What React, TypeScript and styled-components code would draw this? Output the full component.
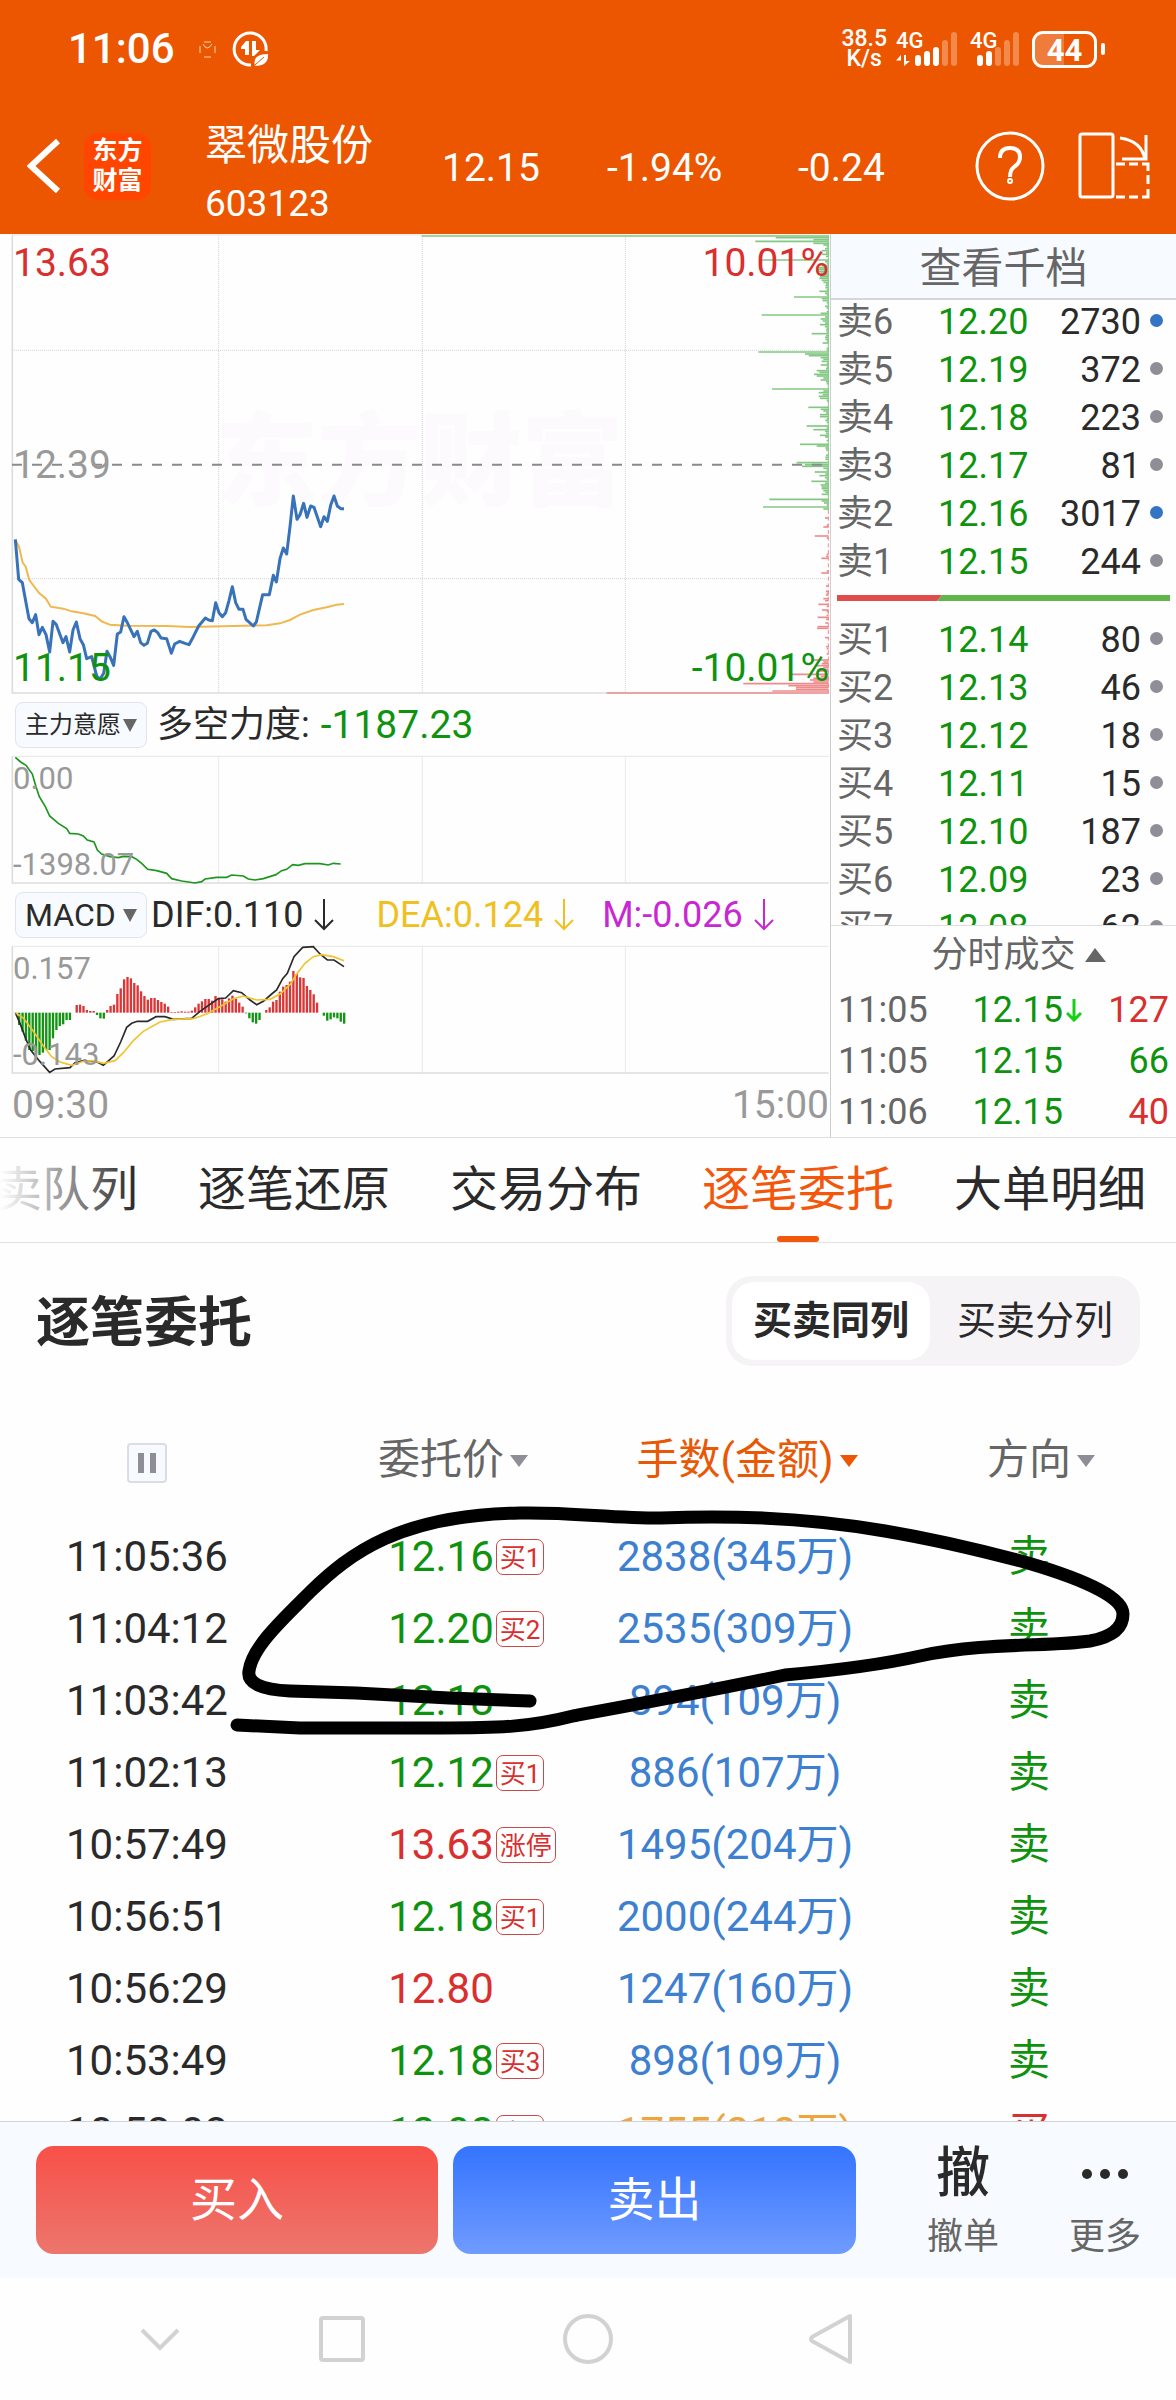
import React from "react";
import styled, { createGlobalStyle } from "styled-components";

const color = {
  brand: "#ec5600",
  red: "#d92f2f",
  green: "#0f930f",
  blue: "#3d80d0",
  amber: "#eda53c",
  ink: "#2a2a2a",
  text: "#666666",
  mute: "#999999",
  line: "#dedede",
  panel: "#f7faff",
};

const Global = createGlobalStyle`
  *, *::before, *::after { box-sizing: border-box; }
  body { margin: 0; background: #fefefe; }
  button {
    margin: 0; padding: 0; border: 0; background: none;
    font: inherit; color: inherit; cursor: pointer;
  }
`;

const Page = styled.div`
  display: flex;
  flex-direction: column;
  height: 100vh;
  overflow: hidden;
  color: ${color.ink};
  background: #fefefe;
  font-family: Roboto, "Noto Sans CJK SC", sans-serif;
  font-size: 36px;
  line-height: 48px;
  white-space: nowrap;
`;

/* ---------- header ---------- */

const Header = styled.header`
  flex: none;
  color: #fff;
  background: ${color.brand};
`;

const StatusBar = styled.div`
  display: flex;
  align-items: center;
  height: 98px;
  padding: 0 71px 0 68px;
`;

const Clock = styled.time`
  margin-right: 24px;
  font-size: 42px;
  font-weight: 500;
`;

const StatusRight = styled.div`
  display: flex;
  align-items: center;
  margin-left: auto;
`;

const NetSpeed = styled.div`
  margin-right: 9px;
  font-size: 23px;
  font-weight: 500;
  line-height: 20px;
  text-align: center;
`;

const Signal = styled.div`
  position: relative;
  height: 36px;
  margin-right: 12px;

  svg { display: block; }
`;

const SignalLabel = styled.span`
  position: absolute;
  left: 0;
  top: 0;
  font-size: 22px;
  font-weight: 500;
  line-height: 20px;
`;

const Battery = styled.div`
  display: flex;
  align-items: center;
  gap: 4px;

  &::after {
    content: "";
    width: 4px;
    height: 12px;
    border-radius: 2px;
    background: #fff;
  }
`;

const BatteryCell = styled.div`
  width: 65px;
  height: 37px;
  border: 3px solid #fff;
  border-radius: 11px;
  background: linear-gradient(90deg, #f07c3c 50%, transparent 50%);
  font-size: 31px;
  font-weight: 700;
  line-height: 33px;
  text-align: center;
`;

const TitleBar = styled.div`
  display: grid;
  grid-template-columns: 57px 121px 237fr 165fr 191fr 177fr 103px 72px;
  align-items: center;
  height: 136px;
  padding: 0 26px 0 27px;
`;

const Figure = styled.span`
  padding-top: 4px;
  font-size: 39px;
`;

const IconButton = styled.button`
  display: flex;
  align-items: center;

  svg { display: block; }
`;

const Logo = styled.div`
  width: 67px;
  height: 67px;
  padding: 3px 0;
  border-radius: 14px;
  background: #ff4600;
  font-size: 25px;
  font-weight: 700;
  line-height: 30px;
  text-align: center;
`;

const StockName = styled.h1`
  margin: 16px 0 0;
  font-size: 42px;
  font-weight: 400;
  line-height: 60px;
`;

const StockCode = styled.div`
  font-size: 37px;
  line-height: 56px;
`;

/* ---------- quote area ---------- */

const Quote = styled.section`
  flex: none;
  display: grid;
  grid-template-columns: 830fr 346fr;
  border-bottom: 1px solid ${color.line};
`;

const Charts = styled.div`
  min-width: 0;
`;

const Chart = styled.div<{ $height: number }>`
  position: relative;
  height: ${(p) => p.$height}px;

  svg { position: relative; display: block; width: 100%; height: 100%; }
`;

const AxisLabel = styled.span<{ $tone: string; $side?: "right"; $top: number; $small?: boolean }>`
  position: absolute;
  top: ${(p) => p.$top}px;
  ${(p) => (p.$side === "right" ? "right: 1px;" : "left: 13px;")}
  color: ${(p) => p.$tone};
  font-size: ${(p) => (p.$small ? 31 : 39)}px;
  line-height: 40px;
`;

const Watermark = styled.span`
  position: absolute;
  top: 164px;
  left: 26%;
  color: #fdfafd;
  font-size: 102px;
  font-weight: 900;
  line-height: 130px;
`;

const IndicatorRow = styled.div`
  display: flex;
  align-items: center;
  height: 60px;
  padding-left: 15px;
`;

const IndicatorButton = styled.button<{ $latin?: boolean }>`
  display: flex;
  align-items: center;
  justify-content: space-between;
  width: 132px;
  height: 46px;
  padding: 0 9px;
  border: 1px solid #e1e4ee;
  border-radius: 8px;
  background: ${color.panel};
  font-size: ${(p) => (p.$latin ? 32 : 24)}px;

  svg { color: ${color.text}; }
`;

const Reading = styled.span<{ $tone?: string; $gap: number }>`
  display: flex;
  align-items: center;
  gap: 11px;
  margin-left: ${(p) => p.$gap}px;
  color: ${(p) => p.$tone ?? color.ink};
`;

const ForceValue = styled.span`
  color: ${color.green};
  font-size: 39px;
`;

const TimeAxis = styled.div`
  display: flex;
  align-items: center;
  justify-content: space-between;
  height: 60px;
  padding: 0 1px 0 12px;
  color: ${color.mute};
  font-size: 39px;
`;

const Side = styled.aside`
  min-width: 0;
  border-left: 1px solid #cdcdd2;
`;

const DepthButton = styled.button`
  display: block;
  width: 100%;
  height: 66px;
  padding-top: 6px;
  border-bottom: 2px solid #d3d6de;
  background: ${color.panel};
  color: ${color.text};
  font-size: 42px;
`;

const DepthPane = styled.div`
  height: 625px;
  overflow: hidden;
`;

const DepthTable = styled.table`
  width: 100%;
  border-collapse: collapse;
  table-layout: fixed;

  &:first-child { margin-top: -2px; }
  td, th { padding: 0; height: 48px; font-weight: 400; text-align: left; }
  th { width: 31%; padding-left: 6px; color: ${color.text}; }
  td:nth-child(2) { width: 28%; color: ${color.green}; }
  td:nth-child(3) { text-align: right; }
  td:nth-child(4) { width: 35px; }
`;

const Dot = styled.span<{ $big?: boolean }>`
  display: block;
  width: 13px;
  height: 13px;
  margin: 0 auto 4px 9px;
  border-radius: 50%;
  background: ${(p) => (p.$big ? "#3374c4" : "#8e8e96")};
`;

const Balance = styled.div`
  height: 30px;
  padding: 9px 6px 15px;

  svg { display: block; width: 100%; height: 6px; }
`;

const TickButton = styled.button`
  display: flex;
  align-items: center;
  justify-content: center;
  gap: 9px;
  width: 100%;
  height: 59px;
  padding-left: 30px;
  border-top: 1px solid ${color.line};
  color: ${color.text};
`;

const TickTable = styled.table`
  width: 100%;
  border-collapse: collapse;
  table-layout: fixed;

  td { padding: 0; height: 51px; }
  td:nth-child(1) { width: 41%; padding-left: 7px; color: ${color.text}; }
  td:nth-child(2) { width: 33%; color: ${color.green}; }
  td:nth-child(3) { padding-right: 7px; text-align: right; }
  svg { margin-left: 3px; color: #16d016; }
`;

const Volume = styled.td<{ $up: boolean }>`
  color: ${(p) => (p.$up ? color.red : color.green)};
`;

/* ---------- tabs ---------- */

const Tabs = styled.nav`
  position: relative;
  flex: none;
  display: flex;
  gap: 60px;
  height: 105px;
  padding-left: 198px;
  overflow: hidden;
  border-bottom: 1px solid #e3e3e3;

  &::before {
    content: "";
    position: absolute;
    z-index: 1;
    left: 0;
    top: 0;
    width: 135px;
    height: 100px;
    background: linear-gradient(90deg, #fefefe, rgba(254, 254, 254, 0));
  }
`;

const Tab = styled.button<{ $active?: boolean }>`
  position: relative;
  flex: none;
  color: ${(p) => (p.$active ? "#f2570c" : color.ink)};
  font-size: 48px;

  &:first-child { margin-left: -252px; }
  &::after {
    content: "";
    display: ${(p) => (p.$active ? "block" : "none")};
    position: absolute;
    left: calc(50% - 21px);
    bottom: 0;
    width: 42px;
    height: 6px;
    border-radius: 3px;
    background: #f2570c;
  }
`;

/* ---------- order list ---------- */

const Orders = styled.section`
  position: relative;
  flex: 1;
  min-height: 0;
  overflow: hidden;
`;

const OrdersHead = styled.div`
  display: flex;
  align-items: center;
  justify-content: space-between;
  height: 156px;
  padding: 0 36px;
`;

const OrdersTitle = styled.h2`
  margin: 6px 0 0;
  font-size: 54px;
  font-weight: 700;
  line-height: 60px;
`;

const Segments = styled.div`
  display: grid;
  grid-template-columns: 198px 198px;
  gap: 6px;
  height: 90px;
  padding: 6px;
  border-radius: 26px;
  background: #f6f3f7;
  font-size: 39px;
`;

const Segment = styled.button<{ $active?: boolean }>`
  border-radius: 22px;
  background: ${(p) => (p.$active ? "#fff" : "transparent")};
  font-weight: ${(p) => (p.$active ? 700 : 400)};
`;

const OrderTable = styled.table`
  width: 100%;
  border-collapse: collapse;
  table-layout: fixed;
  font-size: 42px;
  text-align: center;

  th { height: 122px; padding: 0; font-weight: 400; }
  td { height: 72px; padding: 0; }
`;

const SortButton = styled.button<{ $active?: boolean }>`
  position: relative;
  color: ${(p) => (p.$active ? "#e85805" : color.text)};

  svg {
    position: absolute;
    left: calc(100% + 6px);
    top: 19px;
    color: ${(p) => (p.$active ? color.brand : "#8e8e96")};
  }
`;

const PauseButton = styled.button`
  display: inline-flex;
  align-items: center;
  justify-content: center;
  gap: 6px;
  width: 40px;
  height: 40px;
  border: 2px solid #dadde5;
  border-radius: 4px;
  background: ${color.panel};
  vertical-align: middle;

  &::before, &::after {
    content: "";
    width: 6px;
    height: 20px;
    background: #8e8e96;
  }
`;

const Tone = styled.span<{ $tone: string }>`
  position: relative;
  display: inline-block;
  color: ${(p) => p.$tone};
`;

const Tag = styled.span`
  position: absolute;
  left: calc(100% + 2px);
  top: 6px;
  height: 36px;
  padding: 0 3px;
  border: 1px solid #c94a4a;
  border-radius: 7px;
  color: ${color.red};
  font-size: 26px;
  line-height: 36px;
`;

const Scribble = styled.svg`
  position: absolute;
  left: 0;
  top: 0;
  width: 100%;
  height: 520px;
  pointer-events: none;
`;

/* ---------- bottom ---------- */

const TradeBar = styled.footer`
  flex: none;
  display: grid;
  grid-template-columns: 402fr 403fr 305fr;
  gap: 15px;
  padding: 24px 0 24px 36px;
  border-top: 1px solid #cfd2da;
  background: ${color.panel};
`;

const TradeButton = styled.button<{ $side: "buy" | "sell" }>`
  height: 108px;
  border-radius: 18px;
  background: ${(p) =>
    p.$side === "buy"
      ? "linear-gradient(#f85048, #ec766d)"
      : "linear-gradient(#3474ff, #709bff)"};
  color: #fff;
  font-size: 47px;
`;

const QuickActions = styled.div`
  display: grid;
  grid-template-columns: 1fr 1fr;
  padding-left: 21px;
`;

const QuickButton = styled.button`
  display: flex;
  flex-direction: column;
  align-items: center;
  gap: 18px;
  height: 108px;
  color: ${color.text};
  line-height: 34px;
`;

const QuickIcon = styled.span`
  display: flex;
  align-items: center;
  height: 56px;
  color: ${color.ink};
  font-size: 54px;
  font-weight: 500;
`;

const SystemNav = styled.nav`
  flex: none;
  display: grid;
  grid-template-columns: 116fr 248fr 244fr 242fr;
  justify-items: center;
  align-items: center;
  height: 122px;
  padding: 0 224px 0 102px;
`;

/* ---------- data ---------- */

const sells = [
  ["卖6", "12.20", "2730"],
  ["卖5", "12.19", "372"],
  ["卖4", "12.18", "223"],
  ["卖3", "12.17", "81"],
  ["卖2", "12.16", "3017"],
  ["卖1", "12.15", "244"],
];

const buys = [
  ["买1", "12.14", "80"],
  ["买2", "12.13", "46"],
  ["买3", "12.12", "18"],
  ["买4", "12.11", "15"],
  ["买5", "12.10", "187"],
  ["买6", "12.09", "23"],
  ["买7", "12.08", "62"],
];

const ticks = [
  { time: "11:05", price: "12.15", volume: "127", up: true, arrow: true },
  { time: "11:05", price: "12.15", volume: "66", up: false },
  { time: "11:06", price: "12.15", volume: "40", up: true },
];

const orders = [
  { time: "11:05:36", price: "12.16", tag: "买1", amount: "2838(345万)" },
  { time: "11:04:12", price: "12.20", tag: "买2", amount: "2535(309万)" },
  { time: "11:03:42", price: "12.18", amount: "894(109万)" },
  { time: "11:02:13", price: "12.12", tag: "买1", amount: "886(107万)" },
  { time: "10:57:49", price: "13.63", tag: "涨停", amount: "1495(204万)", up: true },
  { time: "10:56:51", price: "12.18", tag: "买1", amount: "2000(244万)" },
  { time: "10:56:29", price: "12.80", amount: "1247(160万)", up: true },
  { time: "10:53:49", price: "12.18", tag: "买3", amount: "898(109万)" },
  { time: "10:53:08", price: "12.08", tag: "卖1", amount: "1755(212万)", buy: true },
];

const pricePath =
  "46,928 56,1048 67,1058 78,1118 87,1166 97,1178 107,1154 117,1214 127,1192 138,1214 149,1266 159,1174 169,1184 189,1238 198,1220 209,1266 219,1200 229,1176 240,1226 250,1244 260,1286 275,1280 290,1338 300,1348 311,1330 321,1264 331,1282 341,1306 352,1212 362,1206 372,1160 383,1180 402,1220 412,1204 422,1238 432,1246 442,1240 453,1204 463,1200 473,1208 483,1224 500,1226 514,1270 524,1242 539,1234 555,1240 567,1244 580,1220 596,1188 616,1164 626,1170 637,1172 647,1118 657,1148 667,1160 677,1148 687,1112 697,1070 707,1118 717,1138 729,1138 738,1168 760,1188 769,1176 788,1094 808,1094 820,1036 829,1056 840,986 850,954 860,972 870,890 880,798 891,868 900,854 911,820 921,862 932,828 942,832 962,890 972,860 982,874 992,826 1002,798 1012,828 1022,836 1032,836";

const averagePath =
  "46,930 57,950 68,998 77,1010 88,1050 118,1090 138,1106 152,1130 190,1136 215,1144 250,1150 285,1158 305,1174 330,1184 380,1187 500,1188 570,1191 700,1188 800,1186 840,1180 870,1170 900,1154 940,1140 980,1132 1010,1124 1032,1122";

const sellVolumes: [number, number][] = [
  [18, 65], [23, 1127], [29, 1240], [34, 1066], [40, 1240], [45, 1270], [50, 1280], [56, 1275], [62, 1265], [68, 1278],
  [73, 1265], [79, 1278], [90, 1080], [95, 1275], [101, 1280], [107, 1265], [113, 1255], [118, 1250], [124, 1250],
  [129, 1262], [135, 1270], [140, 1260], [145, 1258], [151, 1265], [157, 1270], [162, 1278], [167, 1276], [173, 1276],
  [179, 1280], [184, 1258], [190, 1275], [195, 1280], [201, 1182], [206, 1265], [212, 1268], [218, 1280], [223, 1283],
  [229, 1275], [234, 1280], [245, 1280], [250, 1262], [255, 1085], [261, 1275], [267, 1262], [273, 1268], [279, 1275],
  [284, 1260], [290, 1275], [295, 1280], [300, 1278], [306, 1280], [311, 1235], [317, 1278], [322, 1275], [328, 1276],
  [333, 1280], [339, 1268], [355, 1280], [361, 1280], [366, 1075], [372, 1215], [377, 1226], [383, 1262], [388, 1270],
  [394, 1265], [400, 1280], [405, 1262], [411, 1280], [416, 1278], [422, 1250], [427, 1258], [433, 1242], [438, 1250],
  [444, 1270], [450, 1262], [455, 1278], [461, 1280], [477, 1116], [483, 1270], [488, 1256], [494, 1268], [499, 1256],
  [505, 1260], [511, 1280], [516, 1283], [532, 1225], [538, 1262], [543, 1270], [549, 1278], [554, 1260], [560, 1260],
  [566, 1280], [571, 1276], [577, 1280], [588, 1220], [594, 1280], [599, 1240], [604, 1275], [610, 1278], [616, 1260],
  [621, 1275], [632, 1280], [643, 1200], [648, 1250], [654, 1276], [660, 1278], [676, 1278], [682, 1276], [688, 1276],
  [698, 1190], [704, 1215], [709, 1206], [715, 1270], [720, 1280], [726, 1244], [732, 1276], [737, 1258], [743, 1275],
  [748, 1280], [754, 1234], [760, 1275], [765, 1262], [771, 1265], [776, 1265], [782, 1270], [787, 1276], [793, 1265],
  [808, 1108], [813, 1265], [819, 1272], [825, 1280], [831, 1089], [837, 1270],
];

const buyVolumes: [number, number][] = [
  [864, 1275], [886, 1280], [891, 1270], [918, 1244], [924, 1280], [973, 1280], [979, 1278], [985, 1264], [1023, 1280],
  [1029, 1264], [1068, 1278], [1084, 1278], [1090, 1280], [1095, 1278], [1106, 1270], [1112, 1275], [1123, 1255],
  [1129, 1280], [1140, 1266], [1145, 1280], [1156, 1280], [1162, 1253], [1168, 1278], [1179, 1276], [1190, 1253],
  [1195, 1251], [1223, 1275], [1250, 1278], [1256, 1280], [1272, 1280], [1290, 1240], [1296, 1270], [1301, 1265],
  [1307, 1250], [1312, 1270], [1318, 1262], [1323, 1255], [1333, 1175], [1339, 1262], [1345, 1240], [1350, 1230],
  [1356, 1240], [1361, 1030], [1367, 1165], [1372, 1188], [1378, 1188], [1383, 1117], [1389, 620],
];

const forcePath =
  "46,202 62,216 78,226 97,252 108,290 118,320 136,350 149,378 175,400 200,416 209,430 235,432 250,438 262,450 282,456 292,480 305,492 330,500 355,503 370,499 395,500 410,508 425,520 443,538 470,542 500,550 515,566 545,573 585,579 605,575 615,567 650,562 680,562 695,555 730,558 745,567 765,570 790,566 828,554 845,542 860,538 878,524 895,526 915,521 960,521 985,525 1000,520 1022,522";

/* Histogram heights against the zero line; positive bars rise above it. */
const histogram = [
  -37, -57, -84, -112, -115, -122, -127, -120, -112, -112, -77, -52, -40, -35, -22, -22, 0, 23, 24, 20, 8, 5, 5, -7,
  -17, -18, 8, 20, 24, 56, 73, 100, 107, 103, 89, 82, 64, 50, 39, 44, 44, 38, 32, 27, 18, 2, 2, 3, 4, 3, 3, 6, 16, 27,
  34, 41, 41, 36, 50, 42, 40, 33, 43, 51, 42, 30, 18, -2, -17, -29, -33, -22, 0, 8, 16, 33, 38, 63, 78, 83, 93, 125,
  116, 106, 104, 80, 68, 55, 30, 0, -9, -24, -20, -14, -17, -27, -33,
];

const difPath =
  "46,968 60,1000 78,1048 92,1080 120,1115 149,1147 165,1137 210,1133 225,1118 250,1112 290,1115 310,1126 342,1098 362,1056 380,1012 395,1000 412,994 443,994 468,980 495,980 520,988 575,985 600,964 655,926 677,924 700,902 725,908 750,930 770,944 790,934 815,912 830,900 848,866 862,850 882,800 908,772 940,770 960,792 982,810 1002,810 1032,830";

const deaPath =
  "46,968 70,984 100,1024 130,1068 155,1100 180,1116 215,1126 250,1114 280,1112 310,1120 345,1112 370,1088 400,1052 430,1024 480,996 520,988 580,986 620,972 670,944 700,926 730,918 770,930 810,928 840,912 870,884 890,852 915,820 940,800 965,794 1000,800 1032,812";

/* ---------- drawings ---------- */

const DownTriangle = ({ width = 14, height = 13 }) => (
  <svg width={width} height={height} viewBox="0 0 14 12" preserveAspectRatio="none" aria-hidden="true">
    <path d="M0 0h14L7 12z" fill="currentColor" />
  </svg>
);

const DownArrow = ({ width = 20, height = 32, stroke = 2 }) => (
  <svg width={width} height={height} viewBox={`0 0 ${width} ${height}`} fill="none" aria-hidden="true">
    <path
      d={`M${width / 2} 0V${height - 2}M1 ${height - width / 2 - 1}L${width / 2} ${height - 2}L${width - 1} ${height - width / 2 - 1}`}
      stroke="currentColor"
      strokeWidth={stroke}
    />
  </svg>
);

const SignalBars = ({ on, arrows, shift }: { on: number; arrows?: boolean; shift: number }) => (
  <svg width={shift + 43} height="36" viewBox={`0 0 ${shift + 43} 36`} aria-hidden="true">
    {arrows && (
      <path d="M5 35V24L0 29.5h5zM8 35V24h2v6h4z" fill="#fff" />
    )}
    {[24, 20, 16, 9, 1].map((top, i) => (
      <rect key={top} x={shift + i * 9} y={top} width="6" height={35 - top} rx="3" fill="#fff" opacity={i < on ? 1 : 0.3} />
    ))}
  </svg>
);

const Grid = ({ top, bottom }: { top: number; bottom: number }) => (
  <g fill="none">
    <path
      d={`M656 ${top}V${bottom}M1267 ${top}V${bottom}M1876 ${top}V${bottom}`}
      stroke="#d4d4d4"
      strokeWidth="3"
      strokeDasharray="3 3"
    />
    <path d={`M36 ${top}H2486`} stroke="#e6e6e6" strokeWidth="3" />
    <path d={`M37 ${top}V${bottom}H2486`} stroke="#dddddd" strokeWidth="5" />
  </g>
);

const DepthRows = ({ rows }: { rows: string[][] }) => (
  <DepthTable>
    <tbody>
      {rows.map(([label, price, volume]) => (
        <tr key={label}>
          <th scope="row">{label}</th>
          <td>{price}</td>
          <td>{volume}</td>
          <td>
            <Dot $big={Number(volume) > 1000} />
          </td>
        </tr>
      ))}
    </tbody>
  </DepthTable>
);

export default function App() {
  return (
    <Page>
      <Global />
      <Header>
        <StatusBar>
          <Clock>11:06</Clock>
          <svg width="70" height="36" viewBox="0 0 70 36" fill="none" aria-hidden="true">
            <path d="M5 11h7M5 26h7M1 15v7M16 15v7M4 13q4 8 9 0" stroke="#ffd9b0" strokeWidth="1" />
            <path d="M67 20A16 16 0 1 0 52 34" stroke="#fff" strokeWidth="3" />
            <path d="M50 24V10h-3l-5 6v2h4v6zM53 10h4v9h4l-6 6h-2z" fill="#fff" />
            <path d="M56 35q-3-12 13-12q1 12-13 12z" fill="#fff" />
            <path d="M56 34l9-8" stroke={color.brand} strokeWidth="1" />
          </svg>
          <StatusRight>
            <NetSpeed>
              38.5
              <br />
              K/s
            </NetSpeed>
            <Signal>
              <SignalLabel>4G</SignalLabel>
              <SignalBars on={3} arrows shift={19} />
            </Signal>
            <Signal>
              <SignalLabel>4G</SignalLabel>
              <SignalBars on={2} shift={7} />
            </Signal>
            <Battery>
              <BatteryCell>44</BatteryCell>
            </Battery>
          </StatusRight>
        </StatusBar>
        <TitleBar>
          <IconButton aria-label="返回">
            <svg width="34" height="56" viewBox="0 0 34 56" fill="none">
              <path d="M31 3L4 28l27 25" stroke="#fff" strokeWidth="6" />
            </svg>
          </IconButton>
          <Logo>
            东方
            <br />
            财富
          </Logo>
          <div>
            <StockName>翠微股份</StockName>
            <StockCode>603123</StockCode>
          </div>
          <Figure>12.15</Figure>
          <Figure>-1.94%</Figure>
          <Figure>-0.24</Figure>
          <IconButton aria-label="帮助">
            <svg width="70" height="70" viewBox="0 0 70 70" fill="none" stroke="#fff">
              <circle cx="35" cy="35" r="33" strokeWidth="3" />
              <path d="M25 27q0-10 10-10t10 9q0 6-6 10q-4 3-4 10" strokeWidth="4" />
              <circle cx="35" cy="50" r="1" strokeWidth="4" />
            </svg>
          </IconButton>
          <IconButton aria-label="横屏">
            <svg width="72" height="68" viewBox="0 0 72 68" fill="none" stroke="#fff" strokeWidth="3">
              <rect x="2" y="2" width="33" height="63" rx="2" />
              <path d="M42 6q22 3 25 22M68 3v24H44" />
              <path d="M38 32h9M51 32h9M64 32h6v7M70 43v9M70 57v8h-6M60 65h-9M47 65h-9" />
            </svg>
          </IconButton>
        </TitleBar>
      </Header>

      <Quote>
        <Charts>
          <Chart $height={461}>
            <Watermark>东方财富</Watermark>
            <svg viewBox="0 12 2490 1383" preserveAspectRatio="none" aria-hidden="true">
              <Grid top={15} bottom={1389} />
              <path d="M36 361H2486M36 1046H2486" stroke="#d4d4d4" strokeWidth="3" strokeDasharray="3 3" />
              {sellVolumes.map(([y, x]) => (
                <path key={y} d={`M${x + 1200} ${y}H2486`} stroke="#82c882" strokeWidth="5" />
              ))}
              {buyVolumes.map(([y, x]) => (
                <path key={y} d={`M${x + 1200} ${y}H2486`} stroke="#ee8c8c" strokeWidth="5" />
              ))}
              <path d="M2485 15V840" stroke="#82c882" strokeWidth="3" />
              <path d="M2485 840V1389" stroke="#ee8c8c" strokeWidth="3" strokeDasharray="12 8" />
              <path d="M36 704H2486" stroke="#8a8a8a" strokeWidth="6" strokeDasharray="30 30" />
              <polyline points={averagePath} fill="none" stroke="#f0b84e" strokeWidth="6" />
              <polyline points={pricePath} fill="none" stroke="#3872b8" strokeWidth="9" strokeLinejoin="round" />
            </svg>
            <AxisLabel $tone={color.red} $top={9}>13.63</AxisLabel>
            <AxisLabel $tone={color.red} $top={9} $side="right">10.01%</AxisLabel>
            <AxisLabel $tone={color.mute} $top={211}>12.39</AxisLabel>
            <AxisLabel $tone={color.green} $top={414}>11.15</AxisLabel>
            <AxisLabel $tone={color.green} $top={414} $side="right">-10.01%</AxisLabel>
          </Chart>

          <IndicatorRow>
            <IndicatorButton>
              主力意愿
              <DownTriangle />
            </IndicatorButton>
            <Reading $gap={10}>
              多空力度:
              <ForceValue>-1187.23</ForceValue>
            </Reading>
          </IndicatorRow>
          <Chart $height={130}>
            <svg viewBox="0 195 2490 390" preserveAspectRatio="none" aria-hidden="true">
              <Grid top={199} bottom={579} />
              <polyline points={forcePath} fill="none" stroke="#1c961c" strokeWidth="5" />
            </svg>
            <AxisLabel $small $tone={color.mute} $top={4}>0.00</AxisLabel>
            <AxisLabel $small $tone={color.mute} $top={90}>-1398.07</AxisLabel>
          </Chart>

          <IndicatorRow>
            <IndicatorButton $latin>
              MACD
              <DownTriangle />
            </IndicatorButton>
            <Reading $gap={4}>
              DIF:0.110
              <DownArrow />
            </Reading>
            <Reading $gap={42} $tone="#f0c020">
              DEA:0.124
              <DownArrow />
            </Reading>
            <Reading $gap={28} $tone="#c828d2">
              M:-0.026
              <DownArrow />
            </Reading>
          </IndicatorRow>
          <Chart $height={130}>
            <svg viewBox="0 765 2490 390" preserveAspectRatio="none" aria-hidden="true">
              <Grid top={769} bottom={1149} />
              {histogram.map((value, i) => (
                <rect
                  key={i}
                  x={54 + (i * 975) / 96}
                  y={968 - Math.max(value, 0)}
                  width="7"
                  height={Math.abs(value)}
                  fill={value > 0 ? "#dc3535" : "#119611"}
                />
              ))}
              <polyline points={difPath} fill="none" stroke="#2a2a2a" strokeWidth="5" />
              <polyline points={deaPath} fill="none" stroke="#f0c42e" strokeWidth="5" />
            </svg>
            <AxisLabel $small $tone={color.mute} $top={4}>0.157</AxisLabel>
            <AxisLabel $small $tone={color.mute} $top={90}>-0.143</AxisLabel>
          </Chart>
          <TimeAxis>
            <span>09:30</span>
            <span>15:00</span>
          </TimeAxis>
        </Charts>

        <Side>
          <DepthButton>查看千档</DepthButton>
          <DepthPane>
            <DepthRows rows={sells} />
            <Balance>
              <svg viewBox="0 0 333 6" preserveAspectRatio="none" aria-hidden="true">
                <path d="M0 0h105l-5 6H0z" fill="#e04c4c" />
                <path d="M105 0h228v6H100z" fill="#60b64a" />
              </svg>
            </Balance>
            <DepthRows rows={buys} />
          </DepthPane>
          <TickButton>
            分时成交
            <svg width="21" height="14" viewBox="0 0 21 14" aria-hidden="true">
              <path d="M10 0L21 14H0z" fill={color.text} />
            </svg>
          </TickButton>
          <TickTable>
            <tbody>
              {ticks.map((tick) => (
                <tr key={tick.time + tick.volume}>
                  <td>{tick.time}</td>
                  <td>
                    {tick.price}
                    {tick.arrow && <DownArrow width={16} height={23} stroke={3} />}
                  </td>
                  <Volume $up={tick.up}>{tick.volume}</Volume>
                </tr>
              ))}
            </tbody>
          </TickTable>
        </Side>
      </Quote>

      <Tabs>
        <Tab>买卖队列</Tab>
        <Tab>逐笔还原</Tab>
        <Tab>交易分布</Tab>
        <Tab $active>逐笔委托</Tab>
        <Tab>大单明细</Tab>
      </Tabs>

      <Orders>
        <OrdersHead>
          <OrdersTitle>逐笔委托</OrdersTitle>
          <Segments>
            <Segment $active>买卖同列</Segment>
            <Segment>买卖分列</Segment>
          </Segments>
        </OrdersHead>
        <OrderTable>
          <thead>
            <tr>
              <th>
                <PauseButton aria-label="暂停" />
              </th>
              <th>
                <SortButton>
                  委托价
                  <DownTriangle width={18} height={12} />
                </SortButton>
              </th>
              <th>
                <SortButton $active>
                  手数(金额)
                  <DownTriangle width={18} height={12} />
                </SortButton>
              </th>
              <th>
                <SortButton>
                  方向
                  <DownTriangle width={18} height={12} />
                </SortButton>
              </th>
            </tr>
          </thead>
          <tbody>
            {orders.map((order) => (
              <tr key={order.time}>
                <td>{order.time}</td>
                <td>
                  <Tone $tone={order.up ? color.red : color.green}>
                    {order.price}
                    {order.tag && <Tag>{order.tag}</Tag>}
                  </Tone>
                </td>
                <td>
                  <Tone $tone={order.buy ? color.amber : color.blue}>{order.amount}</Tone>
                </td>
                <td>
                  <Tone $tone={order.buy ? color.red : color.green}>{order.buy ? "买" : "卖"}</Tone>
                </td>
              </tr>
            ))}
          </tbody>
        </OrderTable>
        <Scribble viewBox="0 1242 1176 520" preserveAspectRatio="none" aria-hidden="true">
          <path
            d="M530 1700L449 1697L356 1692L290 1690Q246 1688 249 1670C252 1646 283 1618 310 1591C350 1552 400 1514 520 1512C570 1511 610 1517 661 1517Q780 1512 885 1530Q950 1541 1028 1562Q1123 1590 1123 1613Q1123 1634 1090 1640C1050 1646 985 1641 920 1655C880 1664 840 1669 785 1674C720 1688 660 1699 573 1715C530 1726 500 1727 440 1727L300 1727L237 1724"
            fill="none"
            stroke="#000"
            strokeWidth="13"
            strokeLinecap="round"
            strokeLinejoin="round"
          />
        </Scribble>
      </Orders>

      <TradeBar>
        <TradeButton $side="buy">买入</TradeButton>
        <TradeButton $side="sell">卖出</TradeButton>
        <QuickActions>
          <QuickButton>
            <QuickIcon>撤</QuickIcon>
            撤单
          </QuickButton>
          <QuickButton>
            <QuickIcon>
              <svg width="46" height="10" viewBox="0 0 46 10" fill="currentColor" aria-hidden="true">
                <circle cx="5" cy="5" r="5" />
                <circle cx="23" cy="5" r="5" />
                <circle cx="41" cy="5" r="5" />
              </svg>
            </QuickIcon>
            更多
          </QuickButton>
        </QuickActions>
      </TradeBar>

      <SystemNav aria-label="系统导航">
        <IconButton aria-label="收起">
          <svg width="40" height="24" viewBox="0 0 40 24" fill="none" stroke="#d3d1d4" strokeWidth="4">
            <path d="M2 3l18 18L38 3" />
          </svg>
        </IconButton>
        <IconButton aria-label="最近任务">
          <svg width="48" height="48" viewBox="0 0 48 48" fill="none" stroke="#d3d1d4" strokeWidth="4">
            <rect x="3" y="3" width="42" height="42" rx="2" />
          </svg>
        </IconButton>
        <IconButton aria-label="主屏幕">
          <svg width="52" height="52" viewBox="0 0 52 52" fill="none" stroke="#d3d1d4" strokeWidth="4">
            <circle cx="26" cy="26" r="23" />
          </svg>
        </IconButton>
        <IconButton aria-label="上一步">
          <svg width="46" height="52" viewBox="0 0 46 52" fill="none" stroke="#d3d1d4" strokeWidth="4">
            <path d="M42 3v46L4 28q-2-2 0-4z" strokeLinejoin="round" />
          </svg>
        </IconButton>
      </SystemNav>
    </Page>
  );
}
